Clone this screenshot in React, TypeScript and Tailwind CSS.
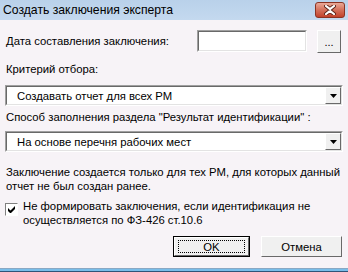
function ComboBox({ value }: { value: string }) {
  return (
    <div className="flex h-[21px] items-stretch border border-t-[#a0a0a0] border-l-[#a0a0a0] border-b-[#fff] border-r-[#fff]">
      <div className="flex flex-1 items-center border border-t-[#696969] border-l-[#696969] border-b-[#e3e3e3] border-r-[#e3e3e3] bg-white">
        <span className="flex-1 pl-[10px] leading-[14px]">{value}</span>
        <div className="flex w-[16px] items-center justify-center self-stretch border border-t-[#fff] border-l-[#fff] border-b-[#696969] border-r-[#696969] bg-[#f0f0f0]">
          <svg width="7" height="4" viewBox="0 0 7 4">
            <path d="M0 0h7L3.5 4z" fill="#000" />
          </svg>
        </div>
      </div>
    </div>
  )
}

export default function App() {
  return (
    <div
      className="flex h-[272px] w-[348px] flex-col overflow-hidden whitespace-nowrap bg-[#f7f3f7] text-[11.3px] leading-[14px] text-black"
      style={{ fontFamily: '"Liberation Sans", Arial, sans-serif' }}
    >
      {/* title bar */}
      <div className="flex h-[20px] shrink-0 items-center justify-between bg-gradient-to-b from-[#b9d1ea] to-[#c4d9ef] pl-[3px] pr-[3px]">
        <span className="text-[12.2px]">Создать заключения эксперта</span>
        <div className="flex h-[16px] w-[30px] items-center justify-center rounded-[3px] border border-[#8b3323] bg-gradient-to-b from-[#e9a897] via-[#d4705b] to-[#c2412a]">
          <svg width="12" height="10" viewBox="0 0 12 10">
            <path d="M2 1l4 3.2L10 1M2 9l4-3.2L10 9" stroke="#5a2318" strokeWidth="4" strokeLinecap="round" fill="none" />
            <path d="M2 1l4 3.2L10 1M2 9l4-3.2L10 9" stroke="#fff" strokeWidth="2.2" strokeLinecap="round" fill="none" />
          </svg>
        </div>
      </div>

      <div className="flex flex-1 flex-col px-[5px]">
        {/* date row */}
        <div className="mt-[10px] flex h-[22px] items-center">
          <span className="flex-1 pl-[1px]">Дата составления заключения:</span>
          <div className="h-[22px] w-[110px] border border-t-[#a0a0a0] border-l-[#a0a0a0] border-b-[#fff] border-r-[#fff]">
            <div className="h-full w-full border border-t-[#696969] border-l-[#696969] border-b-[#e3e3e3] border-r-[#e3e3e3] bg-white" />
          </div>
          <div className="ml-[10px] mr-[2px] flex h-[23px] w-[24px] items-end justify-center border border-t-[#fff] border-l-[#fff] border-b-[#696969] border-r-[#696969] bg-[#f0f0f0] pb-[4px] text-[11px] leading-[11px]">
            ...
          </div>
        </div>

        <div className="mt-[10px] pl-[1px]">Критерий отбора:</div>
        <div className="mt-[9px]">
          <ComboBox value="Создавать отчет для всех РМ" />
        </div>

        <div className="mt-[4px] pl-[1px]">Способ заполнения раздела "Результат идентификации" :</div>
        <div className="mt-[7px]">
          <ComboBox value="На основе перечня рабочих мест" />
        </div>

        <p className="mt-[13px] pl-[1px]">
          Заключение создается только для тех РМ, для которых данный
          <br />
          отчет не был создан ранее.
        </p>

        <div className="mt-[6px] flex items-start">
          <div className="mt-[4px] flex h-[13px] w-[13px] shrink-0 items-center justify-center border border-t-[#808080] border-l-[#808080] border-b-[#fff] border-r-[#fff] bg-white">
            <svg width="7" height="7" viewBox="0 0 7 7">
              <path d="M0 2v3l2 2h1l4-4V0L2.5 4.5z" fill="#000" />
            </svg>
          </div>
          <span className="ml-[5px]">
            Не формировать заключения, если идентификация не
            <br />
            осуществляется по ФЗ-426 ст.10.6
          </span>
        </div>

        <div className="mt-[9px] flex justify-end gap-[11px] pr-[1px]">
          <div className="flex h-[21px] w-[77px] items-center justify-center border border-black bg-[#f0f0f0]">
            <div className="flex h-full w-full items-center justify-center border border-t-[#fff] border-l-[#fff] border-b-[#696969] border-r-[#696969]">
              <div className="flex h-[13px] w-[67px] items-center justify-center border border-dotted border-black">
                OK
              </div>
            </div>
          </div>
          <div className="flex h-[21px] w-[81px] items-center justify-center border border-t-[#fff] border-l-[#fff] border-b-[#696969] border-r-[#696969] bg-[#f0f0f0]">
            Отмена
          </div>
        </div>
      </div>

      {/* bottom frame */}
      <div className="h-[1px] shrink-0 bg-[#8aa8c4]" />
      <div className="h-[2px] shrink-0 bg-[#79bde9]" />
      <div className="h-[1px] shrink-0 bg-[#2f5478]" />
    </div>
  )
}
